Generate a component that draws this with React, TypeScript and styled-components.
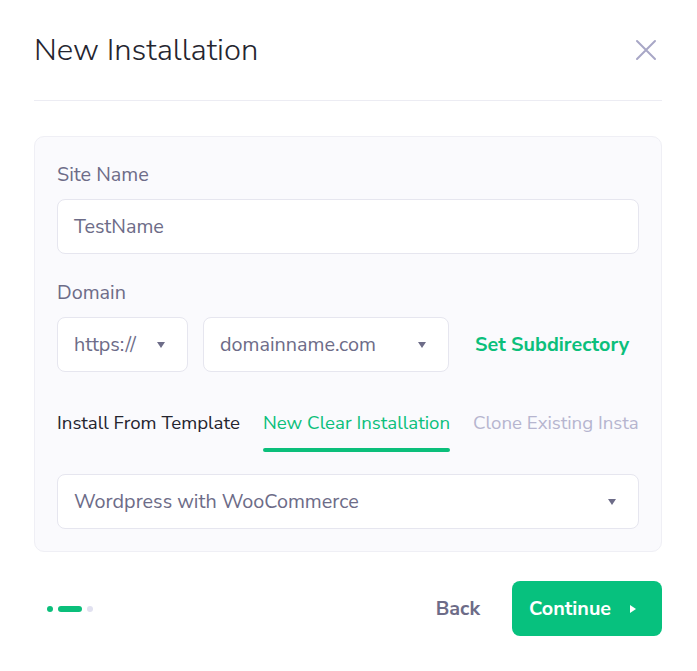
import React from 'react';
import styled, { createGlobalStyle } from 'styled-components';

const GlobalStyle = createGlobalStyle`
  body {
    margin: 0;
    background: #fff;
    font-family: "Nunito Sans", Lato, "Open Sans", sans-serif;
  }
`;

const Modal = styled.div`
  width: 628px;
  padding: 0 35px 0 34px;
  display: flex;
  flex-direction: column;
`;

const Header = styled.div`
  display: flex;
  justify-content: space-between;
  align-items: center;
  height: 100px;
  border-bottom: 1px solid #ececf3;
`;

const Title = styled.h1`
  margin: 0;
  font-size: 31px;
  font-weight: 300;
  color: #25252f;
`;

const CloseButton = styled.button`
  width: 24px;
  height: 24px;
  padding: 0;
  margin-right: 4px;
  background: transparent;
  border: none;
  color: #a8a7c6;
  cursor: pointer;
  display: flex;
  align-items: center;
  justify-content: center;
`;

const Card = styled.div`
  margin-top: 35px;
  background: #fafafd;
  border: 1px solid #efeff5;
  border-radius: 10px;
  padding: 26px 22px 22px 22px;
  display: flex;
  flex-direction: column;
`;

const Label = styled.div<{ $top?: number }>`
  font-size: 19.8px;
  color: #6d6c88;
  margin-top: ${(p) => p.$top || 0}px;
  margin-bottom: 12px;
  line-height: 24px;
`;

const Field = styled.div<{ $width?: number }>`
  box-sizing: border-box;
  height: 55px;
  ${(p) => (p.$width ? `width: ${p.$width}px;` : 'width: 100%;')}
  flex-shrink: 0;
  background: #fff;
  border: 1px solid #e6e6ef;
  border-radius: 8px;
  padding: 0 22px 0 16px;
  display: flex;
  align-items: center;
  justify-content: space-between;
  font-size: 19.8px;
  color: #6d6c88;
`;

const Caret = styled.span`
  width: 0;
  height: 0;
  border-left: 4px solid transparent;
  border-right: 4px solid transparent;
  border-top: 6px solid #6d6c88;
`;

const DomainRow = styled.div`
  display: flex;
  align-items: center;
  gap: 15px;
`;

const LinkButton = styled.button`
  margin-left: 11px;
  background: transparent;
  border: none;
  padding: 0;
  font-family: inherit;
  font-size: 19.8px;
  font-weight: 700;
  color: #0bbf7b;
  white-space: nowrap;
  cursor: pointer;
`;

const Tabs = styled.div`
  display: flex;
  gap: 23px;
  margin-top: 39px;
  margin-bottom: 22px;
  overflow: hidden;
  white-space: nowrap;
`;

const Tab = styled.div<{ $state: 'done' | 'active' | 'idle' }>`
  position: relative;
  flex-shrink: 0;
  font-size: 18.7px;
  line-height: 24px;
  padding-bottom: 17px;
  color: ${(p) =>
    p.$state === 'active' ? '#0bbf7b' : p.$state === 'done' ? '#25252f' : '#b6b5cf'};

  &::after {
    content: '';
    display: ${(p) => (p.$state === 'active' ? 'block' : 'none')};
    position: absolute;
    left: 0;
    right: 0;
    bottom: 0;
    height: 4px;
    border-radius: 2px;
    background: #0bbf7b;
  }
`;

const Footer = styled.div`
  display: flex;
  align-items: center;
  justify-content: space-between;
  margin-top: 29px;
`;

const Steps = styled.div`
  display: flex;
  gap: 5px;
  margin-left: 13px;
`;

const Step = styled.span<{ $wide?: boolean; $on?: boolean }>`
  height: 6px;
  width: ${(p) => (p.$wide ? 24 : 6)}px;
  border-radius: 3px;
  background: ${(p) => (p.$on ? '#0bbf7b' : '#e1e1f0')};
`;

const Actions = styled.div`
  display: flex;
  align-items: center;
  gap: 32px;
`;

const BackButton = styled.button`
  background: transparent;
  border: none;
  padding: 0;
  font-family: inherit;
  font-size: 19.8px;
  font-weight: 700;
  color: #6d6c88;
  cursor: pointer;
`;

const ContinueButton = styled.button`
  width: 150px;
  height: 55px;
  border: none;
  border-radius: 8px;
  background: #07c17e;
  color: #fff;
  font-family: inherit;
  font-size: 19.8px;
  font-weight: 700;
  display: flex;
  align-items: center;
  justify-content: space-between;
  padding: 0 26px 0 17px;
  cursor: pointer;
`;

const PlayCaret = styled.span`
  width: 0;
  height: 0;
  border-top: 4px solid transparent;
  border-bottom: 4px solid transparent;
  border-left: 6px solid #fff;
`;

export default function App() {
  return (
    <>
      <GlobalStyle />
      <Modal>
        <Header>
          <Title>New Installation</Title>
          <CloseButton aria-label="Close">
            <svg width="22" height="22" viewBox="0 0 22 22" fill="none">
              <path d="M2 2L20 20M20 2L2 20" stroke="currentColor" strokeWidth="2" strokeLinecap="round" />
            </svg>
          </CloseButton>
        </Header>
        <Card>
          <Label>Site Name</Label>
          <Field>TestName</Field>
          <Label $top={27}>Domain</Label>
          <DomainRow>
            <Field $width={131}>
              https://
              <Caret />
            </Field>
            <Field $width={246}>
              domainname.com
              <Caret />
            </Field>
            <LinkButton>Set Subdirectory</LinkButton>
          </DomainRow>
          <Tabs>
            <Tab $state="done">Install From Template</Tab>
            <Tab $state="active">New Clear Installation</Tab>
            <Tab $state="idle">Clone Existing Installation</Tab>
          </Tabs>
          <Field>
            Wordpress with WooCommerce
            <Caret />
          </Field>
        </Card>
        <Footer>
          <Steps>
            <Step $on />
            <Step $on $wide />
            <Step />
          </Steps>
          <Actions>
            <BackButton>Back</BackButton>
            <ContinueButton>
              Continue
              <PlayCaret />
            </ContinueButton>
          </Actions>
        </Footer>
      </Modal>
    </>
  );
}
